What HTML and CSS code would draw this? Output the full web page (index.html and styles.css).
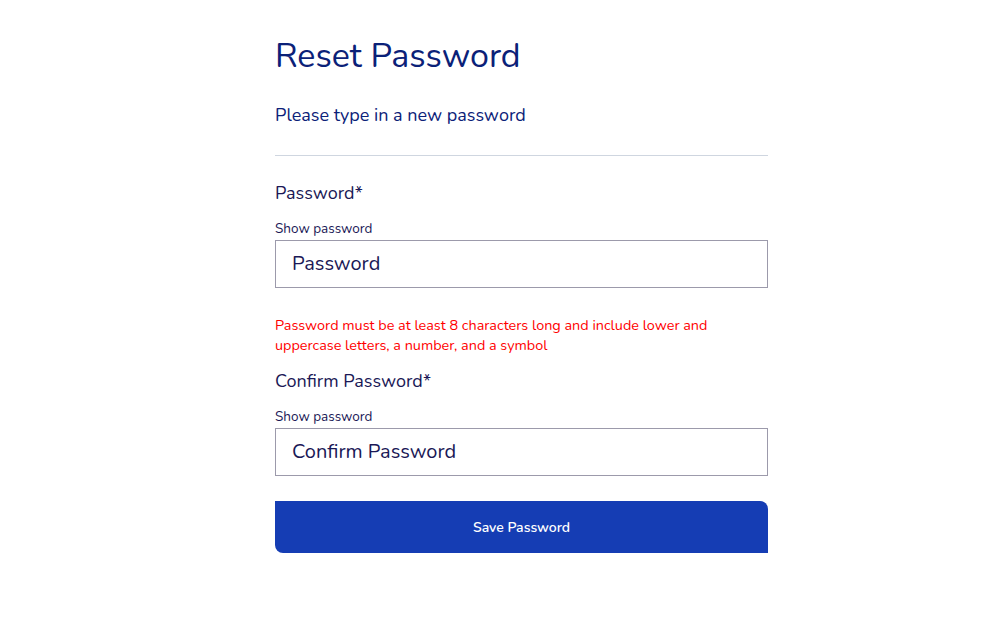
FILE: index.html
```html
<!DOCTYPE html>
<html lang="en">
<head>
<meta charset="utf-8">
<title>Reset Password</title>
<link rel="stylesheet" href="styles.css">
</head>
<body>
<main class="reset">
  <h1 class="reset__title">Reset Password</h1>
  <p class="reset__intro">Please type in a new password</p>
  <hr class="reset__rule">
  <form class="reset__form">
    <div class="field">
      <label class="field__label" for="pw">Password*</label>
      <span class="field__toggle">Show password</span>
      <input class="field__input" id="pw" type="password" placeholder="Password">
      <p class="field__error">Password must be at least 8 characters long and include lower and uppercase letters, a number, and a symbol</p>
    </div>
    <div class="field">
      <label class="field__label" for="pw2">Confirm Password*</label>
      <span class="field__toggle">Show password</span>
      <input class="field__input" id="pw2" type="password" placeholder="Confirm Password">
    </div>
    <button class="reset__submit" type="button">Save Password</button>
  </form>
</main>
</body>
</html>
```
FILE: styles.css
```css
* { box-sizing: border-box; }
body {
  margin: 0;
  background: #ffffff;
  font-family: "Nunito", "Lato", "Open Sans", sans-serif;
  color: #1a1856;
}
.reset {
  width: 493px;
  margin-left: 275px;
  padding-top: 35px;
}
.reset__title {
  margin: 0;
  font-size: 34px;
  line-height: 42px;
  font-weight: 400;
  color: #0b2178;
}
.reset__intro {
  margin: 25px 0 0;
  font-size: 18px;
  line-height: 26px;
  color: #0b2178;
}
.reset__rule {
  margin: 27px 0 0;
  border: 0;
  border-top: 1px solid #cfd6e0;
}
.reset__form {
  display: flex;
  flex-direction: column;
  padding-top: 24px;
}
.field {
  display: flex;
  flex-direction: column;
}
.field__label {
  font-size: 18px;
  line-height: 26px;
  color: #1a1856;
}
.field__toggle {
  margin-top: 14px;
  font-size: 13.5px;
  line-height: 18px;
  color: #1a1856;
}
.field__input {
  margin-top: 2px;
  height: 48px;
  padding: 0 16px 2px;
  border: 1px solid #9c9aab;
  border-radius: 0;
  font-family: inherit;
  font-size: 20px;
  color: #1a1856;
  outline: none;
}
.field__input::placeholder {
  color: #1a1856;
  opacity: 1;
}
.field__error {
  max-width: 460px;
  margin: 27px 0 13px;
  font-size: 14.4px;
  line-height: 20px;
  color: #ff0000;
}
.reset__submit {
  margin-top: 25px;
  height: 52px;
  border: 0;
  border-radius: 0 8px 0 8px;
  background: #153db4;
  color: #ffffff;
  font-family: inherit;
  font-size: 14px;
  font-weight: 600;
  cursor: pointer;
}
```
